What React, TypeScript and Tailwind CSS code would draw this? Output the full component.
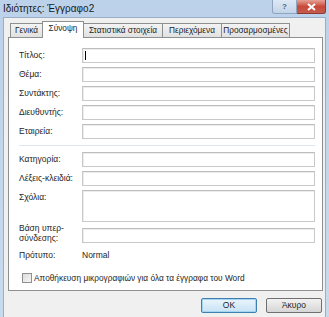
import React from "react";

const FONT = { fontFamily: '"Liberation Sans", Arial, sans-serif' };

const TABS = [
  { t: "Γενικά", w: "w-[33px]" },
  { t: "Σύνοψη", w: "w-[42px]" },
  { t: "Στατιστικά στοιχεία", w: "w-[80px]" },
  { t: "Περιεχόμενα", w: "w-[60px]" },
  { t: "Προσαρμοσμένες", w: "w-[69px]" },
];

function Field({ label, h = "h-[15px]", labelCls = "pt-[2px]" }: { label: React.ReactNode; h?: string; labelCls?: string }) {
  return (
    <div className="flex items-start">
      <div className={`w-[63px] ${labelCls} text-[8.5px] leading-[10px] text-[#1e1e1e]`}>{label}</div>
      <div className={`${h} w-[233px] border border-[#c9c9c9] border-t-[#bdbdbd] bg-white shadow-[inset_1px_1px_0_#ececec]`} />
    </div>
  );
}

export default function App() {
  return (
    <div className="flex h-[317px] w-[329px] flex-col overflow-hidden bg-gradient-to-b from-[#bcd2ea] to-[#c8daee]" style={FONT}>
      {/* title bar */}
      <div className="flex h-[17px] shrink-0 items-start justify-between pl-[3px]">
        <span className="pt-[3px] text-[10px] leading-[12px] text-[#1a1a1a]">Ιδιότητες: Έγγραφο2</span>
        <div className="mr-[3px] flex">
          <div className="flex h-[14px] w-[25px] items-center justify-center rounded-bl-[3px] border border-t-0 border-[#8ea4bf] bg-gradient-to-b from-[#dde8f4] to-[#c3d4e8] text-[8px] font-bold text-[#4d6685]">?</div>
          <div className="flex h-[14px] w-[29px] items-center justify-center rounded-br-[3px] border border-l-0 border-t-0 border-[#8b3a33] bg-gradient-to-b from-[#e6a195] via-[#c8493a] to-[#c55b4c]">
            <svg width="9" height="8" viewBox="0 0 9 8">
              <path d="M1 1 L8 7 M8 1 L1 7" stroke="#fff" strokeWidth="2" />
            </svg>
          </div>
        </div>
      </div>

      {/* client */}
      <div className="mx-[3px] flex-1 border border-b-0 border-[#9aaec6] bg-[#f0f0f0] px-[4px] pt-[3px]">
        <div className="flex items-end pl-[2px]">
          {TABS.map((tab, i) =>
            i === 1 ? (
              <div key={tab.t} className={`relative z-10 -mb-px -ml-px h-[17px] ${tab.w} border border-b-0 border-[#8e8f8f] bg-white pt-[2px] text-center text-[8.25px] leading-[10px] text-[#1e1e1e]`}>
                {tab.t}
              </div>
            ) : (
              <div key={tab.t} className={`h-[14px] ${tab.w} whitespace-nowrap border border-b-0 border-[#8e8f8f] bg-gradient-to-b from-[#f3f3f3] to-[#e1e1e1] pt-[2px] text-center text-[8.25px] leading-[10px] text-[#1e1e1e] ${i === 0 ? "" : "-ml-px"}`}>
                {tab.t}
              </div>
            )
          )}
        </div>

        <div className="h-[254px] w-[315px] border border-[#8e8f8f] bg-white pl-[10px] pt-[10px]">
          <div className="flex flex-col gap-[4px]">
            <div className="relative">
              <Field label="Τίτλος:" />
              <div className="absolute left-[66px] top-[3px] h-[9px] w-px bg-black" />
            </div>
            <Field label="Θέμα:" />
            <Field label="Συντάκτης:" />
            <Field label="Διευθυντής:" />
            <Field label="Εταιρεία:" />
          </div>
          <div className="my-[6px] h-px w-[296px] bg-[#dde6ee]" />
          <div className="flex flex-col gap-[4px]">
            <Field label="Κατηγορία:" />
            <Field label="Λέξεις-κλειδιά:" />
            <Field label="Σχόλια:" h="h-[32px]" />
            <div className="mt-[2px] h-[15px]">
              <Field label={<>Βάση υπερ-<br />σύνδεσης:</>} labelCls="-mt-[6px] pt-[1px]" />
            </div>
          </div>
          <div className="mt-[7px] flex text-[8.5px] leading-[10px] text-[#1e1e1e]">
            <span className="w-[63px]">Πρότυπο:</span>
            <span>Normal</span>
          </div>
          <div className="mt-[13px] flex items-center gap-[2px] pl-[3px] text-[8.3px] leading-[10px] text-[#1e1e1e]">
            <div className="h-[10px] w-[10px] border border-[#8f8f8f] bg-gradient-to-br from-[#dcdcdc] to-[#f6f6f6]" />
            <span>Αποθήκευση μικρογραφιών για όλα τα έγγραφα του Word</span>
          </div>
        </div>

        <div className="mt-[7px] flex justify-end gap-[9px]">
          <div className="flex h-[15px] w-[56px] items-center justify-center rounded-[2px] border border-[#3c7fb1] bg-gradient-to-b from-[#eaf5fc] to-[#c7e3f5] text-[8.5px] text-[#1e1e1e] shadow-[inset_0_0_0_1px_#a6d5f2]">OK</div>
          <div className="-mr-[1px] flex h-[15px] w-[56px] items-center justify-center rounded-[2px] border border-[#707070] bg-gradient-to-b from-[#f2f2f2] to-[#d6d6d6] text-[8.5px] text-[#1e1e1e]">Άκυρο</div>
        </div>
      </div>
    </div>
  );
}
